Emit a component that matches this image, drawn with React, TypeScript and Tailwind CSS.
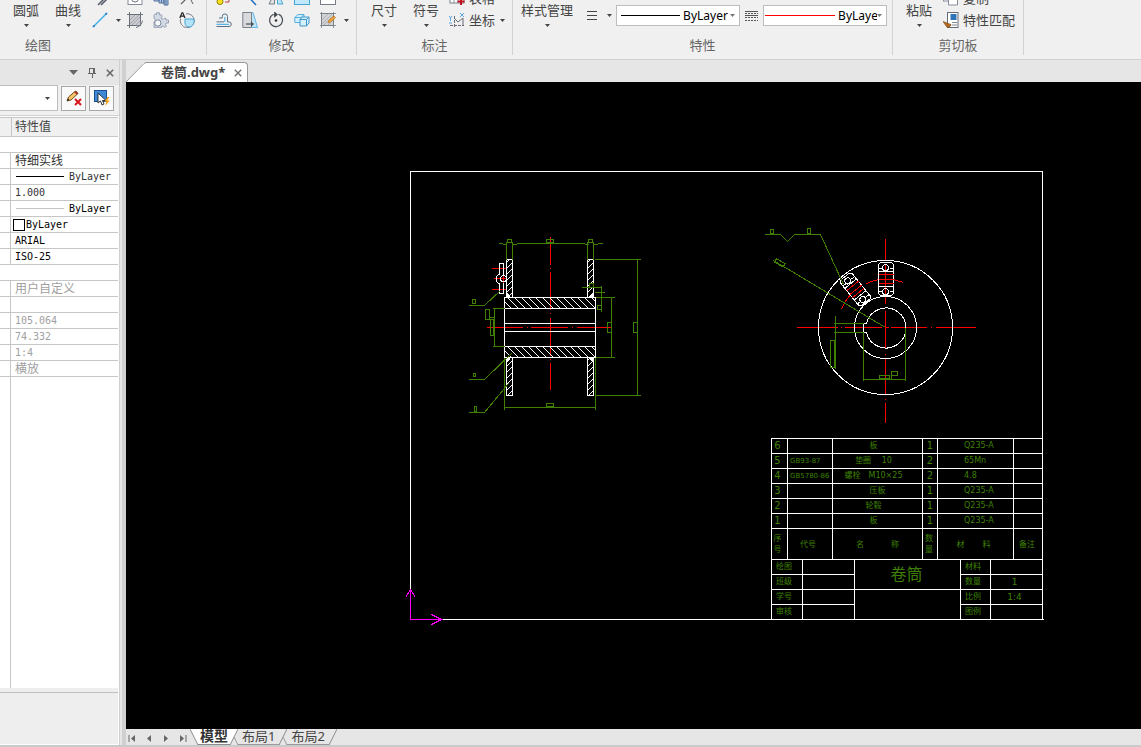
import type { ReactNode } from "react";

/* ---------- small glyphs ---------- */

function Caret() {
  return (
    <svg width="5" height="3" viewBox="0 0 5 3" className="shrink-0">
      <path d="M0 0h5L2.5 3z" fill="#444" />
    </svg>
  );
}

function Glyph({ children }: { children: ReactNode }) {
  return (
    <svg width="16" height="16" viewBox="0 0 16 16" fill="none" className="shrink-0">
      {children}
    </svg>
  );
}

const icons = {
  doubleLine: (
    <Glyph>
      <path d="M1 15 13 3M4 15 15 4" stroke="#555b66" strokeWidth="1.5" />
    </Glyph>
  ),
  line: (
    <Glyph>
      <path d="M1.5 14.5 14.5 1.5" stroke="#3fb0e6" strokeWidth="1.4" />
      <path d="M1 15l1.5-1.5M13.5 2.5 15 1" stroke="#1670b8" strokeWidth="1.6" />
    </Glyph>
  ),
  hole: (
    <Glyph>
      <rect x="1" y="1" width="14" height="13.5" fill="#fff" stroke="#858b98" />
      <circle cx="8" cy="8.5" r="3.5" stroke="#6b7280" />
    </Glyph>
  ),
  hatch: (
    <Glyph>
      <rect x="2.5" y="2.5" width="11" height="11" fill="#c9cbd0" stroke="#7b7f88" />
      <path d="M3 8l5-5M3 12l9-9M5 13l8-8M9 13l4-4" stroke="#9a9da5" strokeWidth=".8" />
      <path d="M2.5 0v16M0 2.5h16M13.5 0v9M0 13.500h9M9 15.500c3-.5 6-3 6.500-7" stroke="#6b6f78" />
    </Glyph>
  ),
  shaft: (
    <Glyph>
      <path d="M1 4h5v7H1zM6 2h5v11H6zM11 1h4v14h-4z" fill="#a9c6e6" stroke="#54719b" />
      <path d="M8.5 2v11M13 1v14" stroke="#54719b" />
    </Glyph>
  ),
  gear: (
    <Glyph>
      <path
        d="M1 3.500 2 2l1.500.5V.8h3v2h2L9 4.500 8 6l2 1.500L11.500 6l1.500.5v1.500h2.500v3H13l-.5 1.500 1 1.500-1.500 1.500-2-1.500-1.500.500v1.200H1V10l1.500-2L1 6z"
        fill="#d3dae6"
        stroke="#8f9aae"
        strokeWidth=".9"
      />
      <circle cx="4.800" cy="11" r="3.200" fill="#f5f7fa" stroke="#7d8799" />
    </Glyph>
  ),
  arrow: (
    <Glyph>
      <path d="M2 14 12 4M6 4h7v6" stroke="#5b5f68" strokeWidth="1.2" />
      <path d="m11 8 3 6" stroke="#5b5f68" />
    </Glyph>
  ),
  detail: (
    <Glyph>
      <path d="M7 1.800a7 7 0 1 1-5.500 5" stroke="#777c86" />
      <path d="M6 7h9v2c0 4-2.500 6-5 6s-4-2-4-4z" fill="#b4e2f8" stroke="#48a5d4" />
      <path d="M.8 6 3 .8h.8L6 6M1.600 4.200h3.600" stroke="#222" strokeWidth="1.2" />
    </Glyph>
  ),
  move: (
    <Glyph>
      <circle cx="4" cy="11.5" r="3" fill="#f9e21b" stroke="#8f7d00" />
      <path d="M9 12h4V6M11 8l2-3 2 3" stroke="#c03a3a" />
    </Glyph>
  ),
  offset: (
    <Glyph>
      <path
        d="M.5 14.500h12.500a2.300 2.300 0 0 0 0-4.600h-1.500V4.500a2.600 2.600 0 0 0-5.200 0v1.500H3M.5 9.900H8"
        stroke="#5b6f86"
      />
      <path d="M.5 12.300h12.500M8.800 5v5" stroke="#57b5e8" strokeWidth="1.2" />
    </Glyph>
  ),
  trim: (
    <Glyph>
      <path d="M2 2 14 15" stroke="#1f6fc0" strokeWidth="1.5" />
    </Glyph>
  ),
  stretch: (
    <Glyph>
      <path d="M9.500.500h1.500l4.500 15h-6z" fill="#bfe4f8" stroke="#63b7e6" />
      <path d="M.8.500H9.500v15H.8z" fill="#d8dade" stroke="#7b7f88" />
      <path d="M4 12h7M9 10l2.500 2L9 14" stroke="#333" />
    </Glyph>
  ),
  mirror: (
    <Glyph>
      <path d="M6.5 3v11H1z" fill="#e2e4e8" stroke="#777c86" />
      <path d="M9.5 3v11H15z" fill="#bfe4f8" stroke="#48a5d4" />
    </Glyph>
  ),
  rotate: (
    <Glyph>
      <path d="M10.500 2.200A6.500 6.500 0 1 1 5 2.500" stroke="#4c5059" strokeWidth="1.3" />
      <path d="M5 2.600h4M6.500 0 9.500 2.600l-3 2.600z" fill="#333" stroke="#4c5059" strokeWidth=".8" />
      <circle cx="8" cy="8.500" r="1.300" fill="#333" />
    </Glyph>
  ),
  scale: (
    <Glyph>
      <rect x=".5" y="1.5" width="15" height="13" fill="#bfe8fb" stroke="#48a5d4" />
    </Glyph>
  ),
  array: (
    <Glyph>
      <path d="M.8 5.500 4 2.500h6v6M.8 5.500h6v5h-6zM6.800 5.500 10 2.500" fill="#d6effc" stroke="#56afe0" />
      <path
        d="M6 7.500 8.500 5h6.500v6l-2.500 3H6zM6 7.500h6.500V14M12.500 7.500 15 5"
        fill="#d6effc"
        stroke="#3d98d0"
      />
    </Glyph>
  ),
  frame: (
    <Glyph>
      <rect x=".5" y="1.5" width="15" height="13" fill="#fff" stroke="#777c86" />
    </Glyph>
  ),
  editHatch: (
    <Glyph>
      <rect x="1.5" y="1.5" width="12" height="12" fill="#d0d2d6" stroke="#7b7f88" />
      <path d="M2 8l6-6M2 12 12 2M4 13l9-9M8 13l5-5" stroke="#a7aab1" strokeWidth=".8" />
      <path d="M1.500 0v16M0 1.500h16M0 13.500h16M13.500 0v16" stroke="#7b7f88" strokeWidth=".8" />
      <path d="m8 11 1-3 5-4 1.500 1.800-5 4.200z" fill="#f3a536" stroke="#b26a12" strokeWidth=".6" />
    </Glyph>
  ),
  sheet: (
    <Glyph>
      <rect x="1" y="2" width="14" height="11" fill="#fff" stroke="#777c86" />
      <path d="M1 6h14M1 9.500h14M5 2v11M9 2v11" stroke="#777c86" strokeWidth=".8" />
      <path d="M12 8v7M8.500 11.500h7" stroke="#c3121f" strokeWidth="2" />
    </Glyph>
  ),
  coord: (
    <Glyph>
      <path d="M5.500 4v11M1 13.500h14" stroke="#666b75" strokeDasharray="3 1" />
      <path d="m5 6 4 4 5-4v8" stroke="#666b75" />
      <path d="m11 1 4 4m0-4-4 4M0 4l1.500 2L3 4M1.500 6v3M0 11h3" stroke="#4b9edb" strokeWidth=".9" />
    </Glyph>
  ),
  copy: (
    <Glyph>
      <rect x=".5" y="1" width="10" height="10" fill="#fff" stroke="#858b98" />
      <path d="M5.500 4h9v11h-9z" fill="#fff" stroke="#858b98" />
    </Glyph>
  ),
  match: (
    <Glyph>
      <rect x="4.500" y=".5" width="10.500" height="15" fill="#fff" stroke="#666b75" />
      <rect x="7.500" y="2" width="6" height="6" fill="#2f74b5" />
      <path d="M9 10.500h5M9 13h5" stroke="#7f8793" />
      <path d="M0 9.500 4 11l4 1.500c0 2-2 3.200-4.200 2.500z" fill="#b36a1d" stroke="#7a4510" strokeWidth=".6" />
    </Glyph>
  ),
};

/* ---------- ribbon ---------- */

function BigButton({ label }: { label: string }) {
  return (
    <button className="flex min-w-[42px] flex-col items-center gap-1 px-2 text-[13px] leading-5 whitespace-nowrap">
      {label}
      <Caret />
    </button>
  );
}

function IconButton({ label, icon, menu }: { label: string; icon: ReactNode; menu?: boolean }) {
  return (
    <button aria-label={label} className="flex h-[22px] min-w-[26px] items-center justify-center gap-2">
      {icon}
      {menu && <Caret />}
    </button>
  );
}

function TextButton({ label, icon, menu }: { label: string; icon: ReactNode; menu?: boolean }) {
  return (
    <button className="flex h-[22px] items-center gap-1 text-[13px] leading-[22px] whitespace-nowrap">
      {icon}
      {label}
      {menu && (
        <span className="pl-px">
          <Caret />
        </span>
      )}
    </button>
  );
}

function Group({ label, indent, children }: { label: string; indent?: boolean; children: ReactNode }) {
  return (
    <section className="flex flex-col gap-1 border-r border-[#d2d2d2]">
      <div className="flex h-[31px] items-end">{children}</div>
      <h2 className={`text-[13px] leading-5 text-[#666] ${indent ? "pl-[25px]" : "text-center"}`}>{label}</h2>
    </section>
  );
}

function Stack({ children }: { children: ReactNode }) {
  return <div className="flex h-[31px] flex-col justify-end">{children}</div>;
}

function LineSelect({ label, sample }: { label: string; sample: "thin" | "red" }) {
  return (
    <div className="flex h-[21px] w-[124px] items-center border border-[#bdbdbd] bg-white">
      <span
        className={
          sample === "thin"
            ? "ml-1 h-px w-[59px] shrink-0 bg-black"
            : "ml-px h-px w-[70px] shrink-0 bg-[#f00]"
        }
      />
      <select
        aria-label={label}
        className="min-w-0 flex-1 appearance-none overflow-hidden bg-transparent pl-[3px] text-[12px] leading-[18px] text-black"
      >
        <option>ByLayer</option>
        <option>ByBlock</option>
      </select>
      <span className="flex w-[9px] shrink-0 justify-start">
        <svg width="5" height="3" viewBox="0 0 5 3">
          <path d="M0 0h5L2.5 3z" fill="#777" />
        </svg>
      </span>
    </div>
  );
}

function Ribbon() {
  return (
    <header className="flex shrink-0 overflow-hidden border-b border-[#d0d0d0] bg-[#f0f0f0] pb-1 text-[#444]">
      <Group label="绘图" indent>
        <div className="flex self-start pl-[5px]">
          <BigButton label="圆弧" />
          <BigButton label="曲线" />
        </div>
        <Stack>
          <div className="flex">
            <div className="flex w-[33px] pl-[3px]">
              <IconButton label="平行线" icon={icons.doubleLine} />
            </div>
            <IconButton label="孔" icon={icons.hole} />
            <IconButton label="轴" icon={icons.shaft} />
            <IconButton label="箭头" icon={icons.arrow} />
          </div>
          <div className="flex pr-1.5">
            <div className="flex w-[33px] pl-[3px]">
              <IconButton label="直线" icon={icons.line} menu />
            </div>
            <IconButton label="填充" icon={icons.hatch} />
            <IconButton label="齿轮" icon={icons.gear} />
            <IconButton label="局部放大" icon={icons.detail} />
          </div>
        </Stack>
      </Group>
      <Group label="修改">
        <Stack>
          <div className="flex pl-1">
            <IconButton label="平移" icon={icons.move} />
            <IconButton label="裁剪" icon={icons.trim} />
            <IconButton label="镜像" icon={icons.mirror} />
            <IconButton label="缩放" icon={icons.scale} />
            <IconButton label="边框" icon={icons.frame} />
          </div>
          <div className="flex pr-[7px] pl-1">
            <IconButton label="等距线" icon={icons.offset} />
            <IconButton label="拉伸" icon={icons.stretch} />
            <IconButton label="旋转" icon={icons.rotate} />
            <IconButton label="阵列" icon={icons.array} />
            <div className="flex w-[34px] justify-end">
              <IconButton label="编辑填充" icon={icons.editHatch} menu />
            </div>
          </div>
        </Stack>
      </Group>
      <Group label="标注">
        <div className="flex self-start pl-1.5">
          <BigButton label="尺寸" />
          <BigButton label="符号" />
        </div>
        <div className="pr-[7px] pl-0.5">
          <Stack>
            <TextButton label="表格" icon={icons.sheet} />
            <TextButton label="坐标" icon={icons.coord} menu />
          </Stack>
        </div>
      </Group>
      <Group label="特性">
        <div className="self-start">
          <BigButton label="样式管理" />
        </div>
        <div className="flex items-center gap-1 self-center pr-[5px] pl-[5px]">
          <button aria-label="线宽" className="flex items-center gap-2.5 pl-px">
            <svg width="10" height="9" viewBox="0 0 10 9" shapeRendering="crispEdges">
              <path d="M0 .5h10M0 4.500h10M0 8.500h10" stroke="#444" />
            </svg>
            <Caret />
          </button>
          <LineSelect label="线宽" sample="thin" />
          <button aria-label="线型" className="px-px">
            <svg width="13" height="10" viewBox="0 0 13 10" shapeRendering="crispEdges">
              <path d="M0 .5h13M0 4.500h13" stroke="#555" />
              <path d="M0 2.500h13M0 6.500h13M0 9.500h13" stroke="#555" strokeDasharray="2 1" />
            </svg>
          </button>
          <LineSelect label="颜色" sample="red" />
        </div>
      </Group>
      <Group label="剪切板">
        <div className="self-start pl-[5px]">
          <BigButton label="粘贴" />
        </div>
        <div className="pr-2 pl-[3px]">
          <Stack>
            <TextButton label="复制" icon={icons.copy} />
            <TextButton label="特性匹配" icon={icons.match} />
          </Stack>
        </div>
      </Group>
    </header>
  );
}

/* ---------- property panel ---------- */

type Row = { value?: string; kind?: "group" | "thick" | "thin" | "color"; tone: string };

const rows: Row[] = [
  { kind: "group", tone: "" },
  { value: "特细实线", tone: "text-[#333]" },
  { value: "ByLayer", kind: "thick", tone: "text-[#333]" },
  { value: "1.000", tone: "text-[#333]" },
  { value: "ByLayer", kind: "thin", tone: "text-black" },
  { value: "ByLayer", kind: "color", tone: "text-black" },
  { value: "ARIAL", tone: "text-black" },
  { value: "ISO-25", tone: "text-black" },
  { kind: "group", tone: "" },
  { value: "用户自定义", tone: "text-[#a0a0a0]" },
  { value: "", tone: "" },
  { value: "105.064", tone: "text-[#a0a0a0]" },
  { value: "74.332", tone: "text-[#a0a0a0]" },
  { value: "1:4", tone: "text-[#a0a0a0]" },
  { value: "横放", tone: "text-[#a0a0a0]" },
];

function Value({ row }: { row: Row }) {
  const chinese = /[\u4e00-\u9fff]/.test(row.value ?? "");
  return (
    <div
      className={`flex h-[15px] items-center whitespace-nowrap leading-[15px] ${row.tone} ${
        chinese ? "text-[12px]" : "font-['DejaVu_Sans_Mono',monospace] text-[10px]"
      } ${row.kind === "color" ? "gap-px pl-0.5" : "pl-1"}`}
    >
      {row.kind === "thick" && <span className="mr-[5px] ml-px h-px w-12 bg-black" />}
      {row.kind === "thin" && <span className="mr-[5px] ml-px h-px w-12 bg-[#c4c4c4]" />}
      {row.kind === "color" && <span className="size-3 border border-black bg-white" />}
      {row.value}
    </div>
  );
}

function PropertyPanel() {
  return (
    <aside className="flex w-[120px] shrink-0 flex-col border-r border-[#cfcfcf] bg-white">
      <div className="flex h-[25px] shrink-0 items-center justify-end gap-2.5 bg-[#e6e6e6] pr-[5px]">
        <button aria-label="菜单">
          <svg width="9" height="5" viewBox="0 0 9 5">
            <path d="M0 0h9L4.500 5z" fill="#666" />
          </svg>
        </button>
        <button aria-label="固定">
          <svg width="8" height="10" viewBox="0 0 8 10" fill="none" stroke="#666" shapeRendering="crispEdges">
            <path d="M1.500.500h5v5h-5zM5.500 0v6M0 5.500h8M4 6v4" />
          </svg>
        </button>
        <button aria-label="关闭面板">
          <svg width="8" height="8" viewBox="0 0 8 8">
            <path d="m.8.800 6.400 6.400M7.200.800.800 7.200" stroke="#666" strokeWidth="1.5" />
          </svg>
        </button>
      </div>
      <div className="flex h-[31px] shrink-0 items-center gap-[3px] border-b border-[#d0d0d0] bg-[#f0f0f0] pr-[5px] pb-1">
        <div className="flex h-[26px] min-w-0 flex-1 items-center border-y border-r border-[#bdbdbd] bg-white pr-[7px]">
          <select
            aria-label="选择对象"
            className="w-full min-w-0 flex-1 appearance-none bg-transparent text-[12px]"
          />
          <Caret />
        </div>
        <button
          aria-label="清除选择"
          className="flex size-[25px] shrink-0 items-center justify-center border border-[#a8a8a8] bg-[#fafafa]"
        >
          <Glyph>
            <path d="m1 11 1.500-4 7-6 2.500 2.500-7 6.500z" fill="#f5c46a" stroke="#6e4a1d" />
            <path d="m1 11 1-2.500L3.500 10z" fill="#222" />
            <path d="m9 1.500 2.500 2.500" stroke="#a23028" strokeWidth="2" />
            <path d="m9 9 6 6M15 9l-6 6" stroke="#d8141c" strokeWidth="2" />
          </Glyph>
        </button>
        <button
          aria-label="快速选择"
          className="flex size-[25px] shrink-0 items-center justify-center border border-[#a8a8a8] bg-[#fafafa]"
        >
          <Glyph>
            <rect x=".5" y=".5" width="12" height="11" fill="#3f88d6" stroke="#1b4f93" />
            <path d="M4 3v10l2.500-2 1.500 4 2-1-1.500-3.500H12z" fill="#fff" stroke="#222" strokeWidth=".9" />
            <path d="m13.500 7-3 4.500h2L11 16l5-5.500h-2.500L15.500 7z" fill="#f6a31c" />
          </Glyph>
        </button>
      </div>
      <table className="mt-px mr-px border-separate border-spacing-0">
        <thead>
          <tr>
            <th className="w-3 border-y border-r border-[#c6c6c6] bg-[#f0f0f0] p-0" aria-label="特性名" />
            <th className="border-y border-[#c6c6c6] bg-[#f0f0f0] p-0 pl-[3px] text-left text-[12px] leading-[18px] font-normal text-[#444]">
              特性值
            </th>
          </tr>
        </thead>
        <tbody>
          {rows.map((row, i) =>
            row.kind === "group" ? (
              <tr key={i}>
                <td colSpan={2} className="h-4 border-b border-[#c6c6c6] p-0" />
              </tr>
            ) : (
              <tr key={i}>
                <td colSpan={2} className="border-b border-[#c6c6c6] p-0">
                  <div className="ml-2.5 border-l border-[#c6c6c6]">
                    <Value row={row} />
                  </div>
                </td>
              </tr>
            ),
          )}
        </tbody>
      </table>
      <div className="ml-2.5 min-h-0 flex-1 border-l border-[#c6c6c6]" />
      <div className="mr-px mb-px shrink-0 bg-[#eee] pt-1">
        <div className="h-[52px] border-t border-[#c0c0c0]" />
      </div>
    </aside>
  );
}

/* ---------- drawing ---------- */

type Box = [number, number, number, number];

const dimensionBoxes: Box[] = [
  [507, 239, 4, 3],
  [588, 239, 4, 3],
  [546, 239, 7, 3],
  [633, 322, 4, 10],
  [607, 322, 4, 10],
  [589, 283, 4, 4],
  [597, 305, 4, 4],
  [485, 309, 4, 10],
  [490, 319, 3, 16],
  [546, 403, 7, 3],
  [472, 299, 3, 4],
  [473, 373, 2, 3],
  [474, 406, 2, 5],
  [770, 229, 3, 4],
  [807, 228, 3, 5],
  [830, 340, 4, 27],
  [879, 375, 10, 3],
  [891, 371, 6, 4],
];

function range(from: number, to: number, step: number) {
  const out: number[] = [];
  for (let v = from; v <= to; v += step) out.push(v);
  return out;
}

function Hatch({ box, step, lean }: { box: Box; step: number; lean: "left" | "right" }) {
  const [x, y, w, h] = box;
  const id = `hatch-${x}-${y}`;
  const d =
    lean === "right"
      ? range(y + 3, y + h + w, step).map((v) => `M${x} ${v}l${w} ${-w}`)
      : range(x - h, x + w, step).map((v) => `M${v} ${y}l${h} ${h}`);
  return (
    <g>
      <clipPath id={id}>
        <rect x={x} y={y} width={w} height={h} />
      </clipPath>
      <path d={d.join("")} clipPath={`url(#${id})`} />
      <rect x={x} y={y} width={w} height={h} />
    </g>
  );
}

function Clamp() {
  return (
    <g>
      <path
        d="M880 262h11l2 2v29l-2 2h-11l-2-2v-29zM878 268h4M889 268h4M878 271h15M878 286h15M878 291h4M889 291h4"
        stroke="#fff"
      />
      <circle cx="885" cy="267" r="3" stroke="#fff" />
      <circle cx="885" cy="291" r="3" stroke="#fff" />
      <path d="M878 274h15M878 279h15M878 283h15" stroke="#f00" />
    </g>
  );
}

function Drawing() {
  return (
    <svg
      width="1015"
      height="647"
      viewBox="126 82 1015 647"
      fill="none"
      strokeWidth="1"
      shapeRendering="crispEdges"
      className="block max-w-none"
      role="img"
      aria-label="卷筒"
    >
      <g transform="translate(.5 .5)">
        {/* sheet frame */}
        <path d="M410 619V171h632v448M410 619h633" stroke="#fff" />

        {/* centre lines */}
        <path
          d="M550 236v28M550 267v1M550 271v38M550 312v1M550 317v38M550 358v1M550 362v27
             M486 327h36M526 327h1M530 327h37M571 327h1M576 327h34
             M491 268h15M493 278h13M491 289h15M503 271v14
             M796 327h41M840 327h1M844 327h37M884 327h4M890 327h36M930 327h1M935 327h40
             M885 238v21M885 263v40M885 310v37M885 353v1M885 357v37M885 398v1M885 402v20"
          stroke="#f00"
        />
        <path d="M841 309A48 48 0 0 1 853 291M859 287l2-2M866 283A48 48 0 0 1 903 282" stroke="#f00" />

        {/* section view */}
        <g stroke="#fff">
          <Hatch box={[506, 259, 6, 38]} step={6} lean="right" />
          <Hatch box={[587, 259, 6, 38]} step={6} lean="right" />
          <Hatch box={[506, 357, 6, 38]} step={6} lean="right" />
          <Hatch box={[587, 357, 6, 38]} step={6} lean="right" />
          <Hatch box={[504, 297, 91, 11]} step={7} lean="left" />
          <Hatch box={[504, 346, 91, 11]} step={7} lean="left" />
          <path d="M504 308v38M595 308v38M504 323h91M504 331h91" />
          <path d="M506 292v5h4zM593 292v5h-4zM506 362v-5h4zM593 362v-5h-4z" fill="#fff" />
          <path d="M499 274v-11h4v11M499 282v11h4v-11M499 273l-3 3v5l3 3" />
          <circle cx="503" cy="278" r="3" />
        </g>

        {/* end view */}
        <g stroke="#fff">
          <circle cx="885" cy="327" r="67" />
          <circle cx="885" cy="327" r="31" />
          <path d="M866 323h-3v9h3A20 20 0 1 0 866 323" />
        </g>
        <Clamp />
        <g transform="rotate(-39 885 327)">
          <Clamp />
        </g>

        {/* dimensions and leaders */}
        <g stroke="#3f8000">
          <path
            d="M498 243h4l1 1h3M512 244h4l1-1h67l1 1h3M593 244h4l1-1h4
               M506 241v18M512 241v18M587 241v18M593 241v18
               M594 259h46M594 395h46M637 259v136M595 297h19M595 357h19M611 297v60
               M581 287h20M594 292h10M601 285v26
               M492 308h12M492 346h12M494 308v38M489 317h5
               M504 357v52M595 357v52M504 407h91
               M468 305h16l16-15M468 379h16l28-27M468 412h16l24-29"
          />
          <path
            d="M764 234h16l7 7 7-7h26l23 50M773 260l112 67
               M833 323h30M833 332h30M835 315v53
               M863 332v48M905 327v53M863 379h42M891 371v8"
          />
          {dimensionBoxes.map(([x, y, w, h]) => (
            <rect key={`${x}-${y}`} x={x} y={y} width={w} height={h} />
          ))}
          <rect x="775" y="260" width="10" height="4" transform="rotate(31 779 261)" />
        </g>

        {/* origin marker */}
        <path d="M410 619v-30M405 597l5-8 5 8M410 619h31M431 614l10 5-10 5" stroke="#f0f" />
      </g>
    </svg>
  );
}

const cell = "border-r border-b border-white p-0 whitespace-nowrap";

const parts = [
  ["6", "", "板", "1", "Q235-A"],
  ["5", "GB93-87", "垫圈\u2003 10", "2", "65Mn"],
  ["4", "GB5780-86", "螺栓\u2003M10×25", "2", "4.8"],
  ["3", "", "\u2003压板", "1", "Q235-A"],
  ["2", "", "轮毂", "1", "Q235-A"],
  ["1", "", "板", "1", "Q235-A"],
];

function PartsList() {
  return (
    <table className="w-[272px] table-fixed border-separate border-spacing-0 border-t border-l border-white text-center">
      <colgroup>
        <col className="w-4" />
        <col className="w-[45px]" />
        <col className="w-[90px]" />
        <col className="w-[15px]" />
        <col className="w-[76px]" />
        <col className="w-[29px]" />
      </colgroup>
      <tbody>
        {parts.map(([no, code, name, count, material]) => (
          <tr key={no}>
            <td className={`${cell} pr-1 text-[10px] leading-[14px]`}>{no}</td>
            <td className={`${cell} pl-0.5 text-left text-[7px] leading-[14px]`}>{code}</td>
            <td className={`${cell} pr-2 text-[8px] leading-[14px]`}>{name}</td>
            <td className={`${cell} text-[10px] leading-[14px]`}>{count}</td>
            <td className={`${cell} pl-[26px] text-left text-[8px] leading-[14px]`}>{material}</td>
            <td className={cell} />
          </tr>
        ))}
        <tr className="text-[8px] leading-[11px]">
          <th className={`${cell} h-[31px] pr-1 font-normal`}>
            序
            <br />号
          </th>
          <th className={`${cell} pr-1 font-normal`}>代号</th>
          <th className={`${cell} font-normal`}>
            <span className="flex justify-center gap-[27px]">
              <span>名</span>
              <span>称</span>
            </span>
          </th>
          <th className={`${cell} pr-0.5 font-normal`}>
            数
            <br />量
          </th>
          <th className={`${cell} font-normal`}>
            <span className="flex justify-center gap-[18px] pr-1">
              <span>材</span>
              <span>料</span>
            </span>
          </th>
          <th className={`${cell} pr-0.5 font-normal`}>备注</th>
        </tr>
      </tbody>
    </table>
  );
}

function TitleBlock() {
  const label = `${cell} h-[15px] pl-1 text-left text-[8px] leading-[14px] font-normal`;
  const value = `${cell} pr-1 text-[9px] leading-[14px]`;
  return (
    <table className="w-[272px] table-fixed border-separate border-spacing-0 border-l border-white text-center">
      <colgroup>
        <col className="w-[31px]" />
        <col className="w-[52px]" />
        <col className="w-[106px]" />
        <col className="w-[30px]" />
        <col className="w-[52px]" />
      </colgroup>
      <tbody>
        <tr>
          <th className={label}>绘图</th>
          <td className={cell} />
          <td rowSpan={2} className={`${cell} pr-0.5 text-[16px] leading-7`}>
            卷筒
          </td>
          <th className={label}>材料</th>
          <td className={value} />
        </tr>
        <tr>
          <th className={label}>班级</th>
          <td className={cell} />
          <th className={label}>数量</th>
          <td className={value}>1</td>
        </tr>
        <tr>
          <th className={label}>学号</th>
          <td className={cell} />
          <td rowSpan={2} className={cell} />
          <th className={label}>比例</th>
          <td className={value}>1:4</td>
        </tr>
        <tr>
          <th className={label}>审核</th>
          <td className={cell} />
          <th className={label}>图例</th>
          <td className={value} />
        </tr>
      </tbody>
    </table>
  );
}

/* ---------- document area ---------- */

function SheetTab({ label, active }: { label: string; active?: boolean }) {
  const fill = active ? "#fff" : "#e8e8e8";
  return (
    <button role="tab" aria-selected={!!active} className="flex h-4 items-stretch">
      {active ? (
        <svg width="8" height="16" viewBox="0 0 8 16">
          <path d="M0 0l8 16V0z" fill={fill} />
          <path d="M0 0l8 16" stroke="#8c8c8c" />
        </svg>
      ) : (
        <svg width="4" height="16" viewBox="0 0 4 16" className="-ml-1">
          <path d="M0 8l4 8" stroke="#9a9a9a" />
        </svg>
      )}
      <span
        className={
          active
            ? "border-b border-[#8c8c8c] bg-white px-0.5 text-[14px] leading-[14px] font-bold text-[#333]"
            : "border-b border-[#9a9a9a] px-1 text-[13px] leading-[14px] text-[#444]"
        }
      >
        {label}
      </span>
      <svg width="8" height="16" viewBox="0 0 8 16">
        <path d="M8 0 0 16V0z" fill={fill} />
        <path d="M8 0 0 16" stroke="#8c8c8c" />
      </svg>
    </button>
  );
}

const pagers = [
  { label: "首页", bar: "M1 0v7", tip: "M7 0v7L3 3.500z" },
  { label: "上一页", bar: "", tip: "M6 0v7L2 3.500z" },
  { label: "下一页", bar: "", tip: "M2 0v7l4-3.500z" },
  { label: "末页", bar: "M7 0v7", tip: "M1 0v7l4-3.500z" },
];

function DocumentArea() {
  return (
    <main className="flex min-w-0 flex-1 flex-col bg-[#e6e6e6]">
      <div role="tablist" className="flex h-[22px] shrink-0 items-end">
        <svg width="20" height="20" viewBox="0 0 20 20" className="shrink-0">
          <path d="M0 20 18 1l2-.5V20z" fill="#fff" />
          <path d="M0 20 18 1.500l2-1" stroke="#9a9a9a" fill="none" />
        </svg>
        <div className="flex h-5 items-start gap-[9px] rounded-tr-sm border-t border-r border-[#9a9a9a] bg-white pr-[5px] pl-[15px]">
          <button role="tab" aria-selected="true" className="text-[13px] leading-[18px] font-bold text-[#444]">
            卷筒.dwg*
          </button>
          <button aria-label="关闭文档" className="pt-1.5">
            <svg width="8" height="8" viewBox="0 0 8 8">
              <path d="m.8.800 6.400 6.400M7.200.800.800 7.200" stroke="#777" strokeWidth="1.5" />
            </svg>
          </button>
        </div>
      </div>
      <div className="relative min-h-0 flex-1 overflow-hidden bg-black">
        <Drawing />
        <div className="absolute top-[356px] left-[645px] font-['DejaVu_Sans','Noto_Sans_CJK_SC',sans-serif] text-[#3f8000]">
          <PartsList />
          <TitleBlock />
        </div>
      </div>
      <div className="flex h-4 shrink-0 items-center">
        <div className="flex gap-[9px] pr-[3px] pl-0.5">
          {pagers.map((p) => (
            <button key={p.label} aria-label={p.label} className="pt-0.5">
              <svg width="8" height="7" viewBox="0 0 8 7" fill="#666">
                <path d={p.tip} />
                <path d={p.bar} stroke="#666" />
              </svg>
            </button>
          ))}
        </div>
        <div role="tablist" className="flex">
          <SheetTab label="模型" active />
          <SheetTab label="布局1" />
          <SheetTab label="布局2" />
        </div>
      </div>
    </main>
  );
}

export default function App() {
  return (
    <div className="flex h-screen flex-col overflow-hidden border-b-2 border-[#cacaca] bg-[#e6e6e6] font-['Noto_Sans','Noto_Sans_CJK_SC',sans-serif]">
      <Ribbon />
      <div className="flex min-h-0 flex-1">
        <PropertyPanel />
        <div className="w-1.5 shrink-0 border-r-4 border-[#d0d0d0] bg-[#e6e6e6]" />
        <DocumentArea />
      </div>
    </div>
  );
}
